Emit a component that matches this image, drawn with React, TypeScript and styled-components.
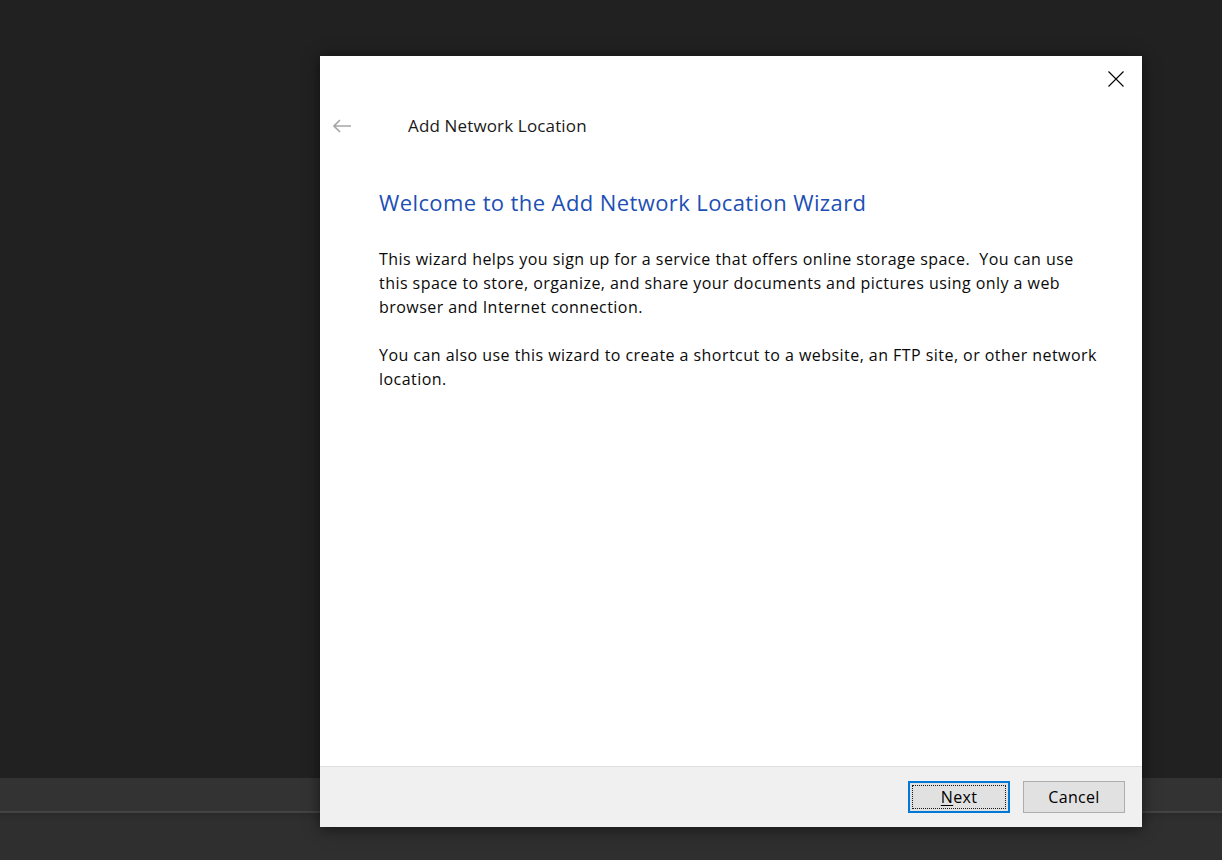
import React from "react";
import styled, { createGlobalStyle } from "styled-components";

const GlobalStyle = createGlobalStyle`
  html, body {
    margin: 0;
    padding: 0;
    background: #212121;
  }
  * { box-sizing: border-box; }
`;

const Desktop = styled.div`
  position: relative;
  width: 1222px;
  height: 860px;
  display: flex;
  flex-direction: column;
  background: #212121;
  overflow: hidden;
  font-family: "Open Sans", "Noto Sans", sans-serif;
`;

const MainArea = styled.div`
  flex: 1;
  background: #212121;
`;

const StatusBand = styled.div`
  height: 35px;
  background: #333333;
  border-bottom: 2px solid #434343;
`;

const BottomArea = styled.div`
  height: 47px;
  background: linear-gradient(#2a2a2a, #2f2f2f 8px, #2f2f2f);
`;

const Dialog = styled.div`
  position: absolute;
  left: 320px;
  top: 56px;
  width: 822px;
  height: 771px;
  background: #ffffff;
  display: flex;
  flex-direction: column;
  box-shadow: 0 2px 14px rgba(0, 0, 0, 0.55);
`;

const TopBar = styled.div`
  height: 56px;
  display: flex;
  justify-content: flex-end;
  align-items: flex-start;
  padding: 15px 18px 0 0;
`;

const CloseButton = styled.button`
  width: 16px;
  height: 16px;
  padding: 0;
  border: none;
  background: transparent;
  display: flex;
  cursor: pointer;
`;

const Header = styled.div`
  height: 28px;
  display: flex;
  align-items: center;
  padding-left: 13px;
`;

const BackArrow = styled.span`
  display: flex;
  width: 19px;
  margin-right: 56px;
`;

const HeaderTitle = styled.span`
  font-size: 17px;
  letter-spacing: 0.15px;
  color: #1a1a1a;
  line-height: 28px;
`;

const Content = styled.div`
  flex: 1;
  padding: 47px 20px 0 59px;
`;

const Heading = styled.h1`
  margin: 0 0 30px 0;
  font-size: 22px;
  font-weight: 400;
  letter-spacing: 0.4px;
  line-height: 30px;
  color: #1d4fb5;
  white-space: nowrap;
`;

const Paragraph = styled.p`
  margin: 0 0 24px 0;
  font-size: 16px;
  letter-spacing: 0.45px;
  line-height: 24px;
  color: #0a0a0a;
  white-space: nowrap;
`;

const Footer = styled.div`
  height: 61px;
  border-top: 1px solid #dfdfdf;
  background: #f0f0f0;
  display: flex;
  justify-content: flex-end;
  align-items: center;
  gap: 13px;
  padding: 0 17px 0 0;
`;

const Button = styled.button<{ $focused?: boolean }>`
  width: ${(p) => (p.$focused ? "102px" : "102px")};
  height: 32px;
  background: #e1e1e1;
  border: ${(p) => (p.$focused ? "2px solid #0078d7" : "1px solid #adadad")};
  font-family: "Open Sans", "Noto Sans", sans-serif;
  font-size: 16px;
  letter-spacing: 0.3px;
  color: #000;
  padding: 0;
  display: flex;
  align-items: center;
  justify-content: center;
  outline: ${(p) => (p.$focused ? "1px dotted #1a1a1a" : "none")};
  outline-offset: -5px;
  cursor: pointer;
`;

const Mnemonic = styled.span`
  text-decoration: underline;
  text-underline-offset: 2px;
`;

export default function App() {
  return (
    <>
      <GlobalStyle />
      <Desktop>
        <MainArea />
        <StatusBand />
        <BottomArea />
        <Dialog>
          <TopBar>
            <CloseButton aria-label="Close">
              <svg width="16" height="16" viewBox="0 0 16 16">
                <path d="M0.5 0.5 L15.5 15.5 M15.5 0.5 L0.5 15.5" stroke="#000" strokeWidth="1.1" fill="none" />
              </svg>
            </CloseButton>
          </TopBar>
          <Header>
            <BackArrow>
              <svg width="19" height="14" viewBox="0 0 19 14">
                <path d="M7 1 L1 7 L7 13 M1 7 H18" stroke="#a6a6a6" strokeWidth="1.6" fill="none" />
              </svg>
            </BackArrow>
            <HeaderTitle>Add Network Location</HeaderTitle>
          </Header>
          <Content>
            <Heading>Welcome to the Add Network Location Wizard</Heading>
            <Paragraph>
              This wizard helps you sign up for a service that offers online storage space.&nbsp; You can use
              <br />
              this space to store, organize, and share your documents and pictures using only a web
              <br />
              browser and Internet connection.
            </Paragraph>
            <Paragraph>
              You can also use this wizard to create a shortcut to a website, an FTP site, or other network
              <br />
              location.
            </Paragraph>
          </Content>
          <Footer>
            <Button $focused>
              <span>
                <Mnemonic>N</Mnemonic>ext
              </span>
            </Button>
            <Button>Cancel</Button>
          </Footer>
        </Dialog>
      </Desktop>
    </>
  );
}
